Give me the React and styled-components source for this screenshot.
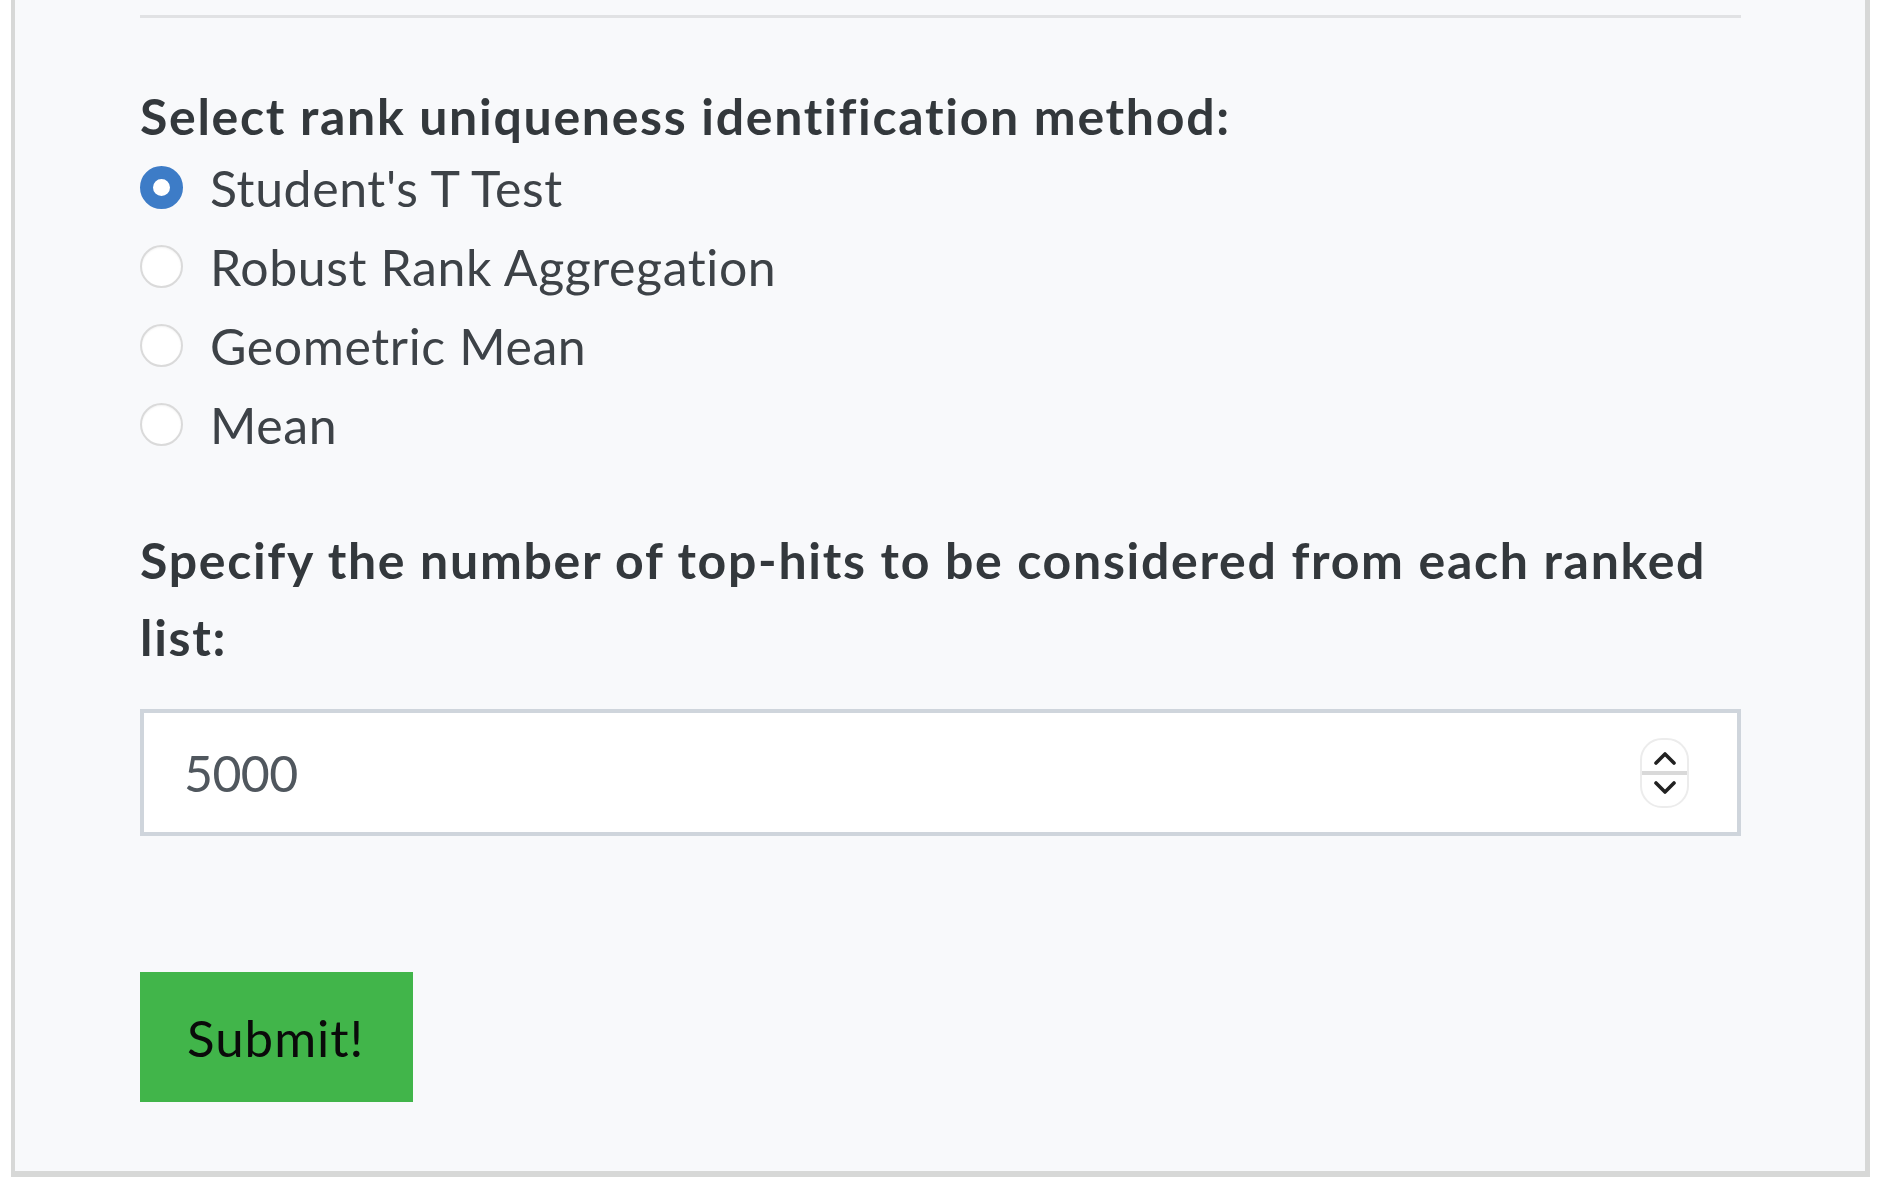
import React from "react";
import styled, { createGlobalStyle } from "styled-components";

const GlobalStyle = createGlobalStyle`
  html, body {
    margin: 0;
    padding: 0;
    background: #ffffff;
  }
  body {
    font-family: Lato, "Noto Sans", sans-serif;
  }
  * { box-sizing: border-box; }
`;

const Panel = styled.div`
  margin: 0 7px 0 11px;
  padding: 15px 124px 69px 125px;
  background: #f8f9fb;
  border-left: 4px solid #d7d8d7;
  border-right: 5px solid #d7d8d7;
  border-bottom: 6px solid #d7d8d7;
  font-family: Lato, "Noto Sans", sans-serif;
`;

const Rule = styled.hr`
  margin: 0;
  border: 0;
  border-top: 3px solid #e1e2e4;
  width: 100%;
`;

const Group = styled.div`
  display: flex;
  flex-direction: column;
  margin-top: ${(p) => p.$top}px;
`;

const Label = styled.div`
  font-size: 50px;
  font-weight: 700;
  color: #33383c;
  line-height: ${(p) => p.$lh}px;
  letter-spacing: 1.7px;
`;

const RadioList = styled.div`
  display: flex;
  flex-direction: column;
  gap: 7px;
`;

const RadioRow = styled.label`
  display: flex;
  align-items: center;
  gap: 27px;
  height: 72px;
  font-size: 50px;
  line-height: 72px;
  color: #3d4247;
  letter-spacing: 0.6px;
  cursor: pointer;
`;

const Radio = styled.input`
  appearance: none;
  -webkit-appearance: none;
  margin: -2px 0 0 0;
  flex: 0 0 auto;
  width: 43px;
  height: 43px;
  border-radius: 50%;
  background: #ffffff;
  border: 2px solid #dadada;
  box-shadow: inset 0 1px 2px rgba(0, 0, 0, 0.05);

  &:checked {
    border: 13px solid #3d7cc7;
    background: #ffffff;
    box-shadow: none;
  }
`;

const InputWrap = styled.div`
  position: relative;
  margin-top: 33px;
`;

const NumberInput = styled.input`
  display: block;
  width: 100%;
  height: 127px;
  padding: 0 120px 0 40px;
  border: 4px solid #cfd5dc;
  border-radius: 0;
  background: #ffffff;
  font-family: Lato, "Noto Sans", sans-serif;
  font-size: 50px;
  letter-spacing: -0.6px;
  color: #50575e;
  outline: none;
  -moz-appearance: textfield;

  &::-webkit-outer-spin-button,
  &::-webkit-inner-spin-button {
    -webkit-appearance: none;
    margin: 0;
  }
`;

const Spinner = styled.div`
  position: absolute;
  right: 52px;
  top: 50%;
  transform: translateY(-50%);
  width: 49px;
  height: 70px;
  border: 2px solid #ececec;
  border-radius: 22px;
  background: #ffffff;
  display: flex;
  flex-direction: column;
  overflow: hidden;
`;

const SpinHalf = styled.div`
  flex: 1;
  display: flex;
  align-items: ${(p) => (p.$up ? "flex-end" : "flex-start")};
  justify-content: center;
  padding: ${(p) => (p.$up ? "0 0 6px" : "6px 0 0")};
`;

const SpinDivider = styled.div`
  height: 4px;
  background: #d9d9d9;
`;

const Submit = styled.button`
  align-self: flex-start;
  margin-top: 136px;
  height: 130px;
  padding: 0 49px 0 47px;
  border: 0;
  border-radius: 0;
  background: #41b54a;
  color: #0a0a0a;
  font-family: Lato, "Noto Sans", sans-serif;
  font-size: 51px;
  font-weight: 400;
  letter-spacing: 1px;
  cursor: pointer;
`;

const Chevron = ({ up }) => (
  <svg width="24" height="14" viewBox="0 0 24 14" fill="none">
    <path
      d={up ? "M3 12 L12 3 L21 12" : "M3 2 L12 11 L21 2"}
      stroke="#222"
      strokeWidth="3.6"
      strokeLinecap="round"
      strokeLinejoin="round"
    />
  </svg>
);

const options = [
  "Student's T Test",
  "Robust Rank Aggregation",
  "Geometric Mean",
  "Mean",
];

export default function App() {
  return (
    <>
      <GlobalStyle />
      <Panel>
        <Rule />
        <Group $top={62}>
          <Label $lh={72}>Select rank uniqueness identification method:</Label>
          <RadioList>
            {options.map((o, i) => (
              <RadioRow key={o}>
                <Radio type="radio" name="method" defaultChecked={i === 0} />
                {o}
              </RadioRow>
            ))}
          </RadioList>
        </Group>
        <Group $top={61}>
          <Label $lh={77}>
            Specify the number of top-hits to be considered from each ranked
            list:
          </Label>
          <InputWrap>
            <NumberInput type="number" defaultValue={5000} />
            <Spinner>
              <SpinHalf $up>
                <Chevron up />
              </SpinHalf>
              <SpinDivider />
              <SpinHalf>
                <Chevron />
              </SpinHalf>
            </Spinner>
          </InputWrap>
          <Submit type="button">Submit!</Submit>
        </Group>
      </Panel>
    </>
  );
}
